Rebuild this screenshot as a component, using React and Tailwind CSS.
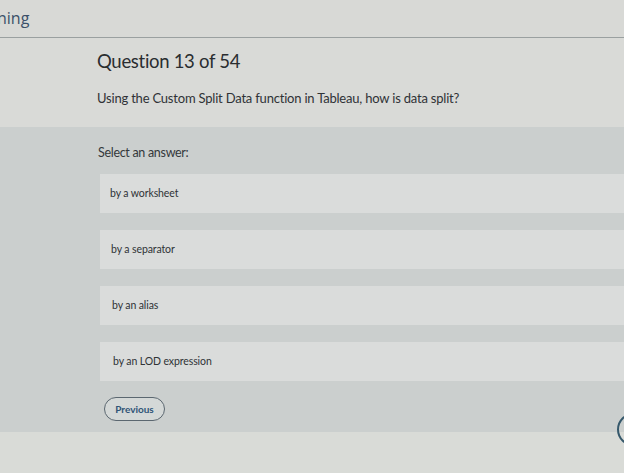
export default function App() {
  const options = ["by a worksheet", "by a separator", "by an alias", "by an LOD expression"];
  return (
    <div className="w-[624px] h-[473px] overflow-hidden bg-[#d6d8d4] flex flex-col" style={{ fontFamily: "Lato, 'Open Sans', sans-serif" }}>
      <div className="h-[38px] shrink-0 border-b border-[#9aa0a0] bg-[#d8d9d6] flex items-start">
        <span className="ml-[-3px] mt-[8px] text-[16px] leading-[20px] text-[#3b5069]" style={{ fontFamily: "'Open Sans', sans-serif" }}>ning</span>
      </div>
      <div className="h-[89px] shrink-0 bg-[#d9dad7] pl-[97px] flex flex-col">
        <div className="mt-[11px] text-[18.5px] leading-[24px] text-[#2a2d30] tracking-[-0.3px]">Question 13 of 54</div>
        <div className="mt-[17px] text-[13px] leading-[16px] text-[#2f3236] tracking-[-0.2px]">Using the Custom Split Data function in Tableau, how is data split?</div>
      </div>
      <div className="h-[305px] shrink-0 bg-[#cbcfce] flex flex-col">
        <div className="pl-[98px] mt-[18px] text-[12.5px] leading-[16px] text-[#34383b] tracking-[-0.3px]">Select an answer:</div>
        <div className="mt-[13px] flex flex-col gap-[17px] pl-[100px]">
          {options.map((o, i) => (
            <div key={o} className="h-[39px] bg-[#dadcdb] flex items-center text-[10.5px] text-[#2f3336] tracking-[-0.1px]" style={{ paddingLeft: 10 + i }}>
              {o}
            </div>
          ))}
        </div>
        <div className="mt-[16px] flex items-start justify-between pl-[104px]">
          <button className="h-[24px] w-[61px] rounded-full border-[1.5px] border-[#5b6770] text-[10px] font-bold text-[#2f5476] bg-[#d4d8d7]">Previous</button>
          <div className="relative z-10 mt-[16px] mr-[-26px] w-[33px] h-[33px] rounded-full border-[2px] border-[#35586b]" />
        </div>
      </div>
      <div className="flex-1 bg-[#d9dbd7]" />
    </div>
  );
}
